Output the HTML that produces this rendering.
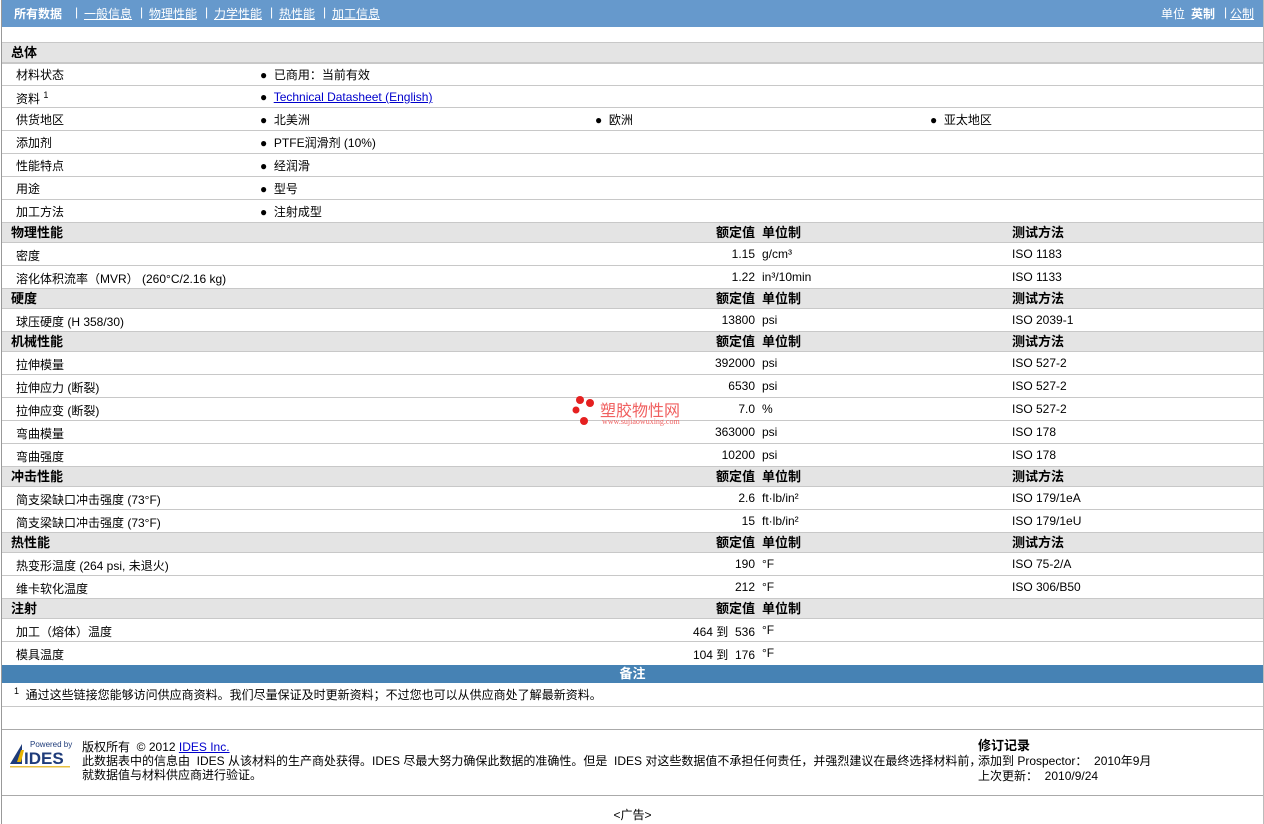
<!DOCTYPE html>
<html><head><meta charset="utf-8">
<style>
body{margin:0;width:1264px;height:824px;background:#fff;position:relative;overflow:hidden;font-family:"Liberation Sans","Noto Sans CJK SC",sans-serif;font-size:12px;color:#000}
.wrap{position:absolute;left:1px;top:0;width:1261px;height:824px;border-left:1px solid #999;border-right:1px solid #bbb}
.top{position:absolute;left:0;top:0;width:1261px;height:27px;background:#6699cc;color:#fff}
.top span{position:absolute;top:5px;font-size:12px}
.top u{text-decoration:underline}
.r{position:absolute;left:0;width:1261px;border-bottom:1px solid #c8c8c8}
.h{background:#e4e4e4;font-weight:bold;font-size:13px}
.r span{position:absolute;white-space:nowrap}
.h span{top:-1px !important}
.r:not(.h) span{margin-top:-1px}
.b{left:258px}
.v{right:508px;text-align:right}
.u{left:760px}
.t{left:1010px}
a{color:#0000cc}
</style></head><body>
<div class="wrap">
<div class="top">
<span style="left:12px;font-weight:bold">所有数据</span>
<span style="left:73px">|</span><span style="left:82px"><u>一般信息</u></span>
<span style="left:138px">|</span><span style="left:147px"><u>物理性能</u></span>
<span style="left:203px">|</span><span style="left:212px"><u>力学性能</u></span>
<span style="left:268px">|</span><span style="left:277px"><u>热性能</u></span>
<span style="left:321px">|</span><span style="left:330px"><u>加工信息</u></span>
<span style="left:1159px">单位</span><span style="left:1189px;font-weight:bold">英制</span><span style="left:1222px">|</span><span style="left:1228px"><u>公制</u></span>
</div>
<div class="r" style="top:42px;height:20px;border-top:1px solid #c8c8c8" ></div>
<div class="r h" style="top:43px;height:19px"><span style="left:9px;top:2px">总体</span></div>

<div class="r" style="top:63px;height:22px"><span style="left:14px;top:4px">材料状态</span><span class="b" style="top:4px">●&nbsp; 已商用：当前有效</span></div>
<div class="r" style="top:86px;height:21px"><span style="left:14px;top:5px">资料 <sup style="font-size:9px">1</sup></span><span class="b" style="top:5px">●&nbsp; <a href="#">Technical Datasheet (English)</a></span></div>
<div class="r" style="top:108px;height:22px"><span style="left:14px;top:4px">供货地区</span><span class="b" style="top:4px">●&nbsp; 北美洲</span><span style="left:593px;top:4px">●&nbsp; 欧洲</span><span style="left:928px;top:4px">●&nbsp; 亚太地区</span></div>
<div class="r" style="top:131px;height:22px"><span style="left:14px;top:4px">添加剂</span><span class="b" style="top:4px">●&nbsp; PTFE润滑剂 (10%)</span></div>
<div class="r" style="top:154px;height:22px"><span style="left:14px;top:4px">性能特点</span><span class="b" style="top:4px">●&nbsp; 经润滑</span></div>
<div class="r" style="top:177px;height:22px"><span style="left:14px;top:4px">用途</span><span class="b" style="top:4px">●&nbsp; 型号</span></div>
<div class="r" style="top:200px;height:22px"><span style="left:14px;top:4px">加工方法</span><span class="b" style="top:4px">●&nbsp; 注射成型</span></div>

<div class="r h" style="top:223px;height:19px"><span style="left:9px;top:1px">物理性能</span><span class="v" style="top:1px">额定值</span><span class="u" style="top:1px">单位制</span><span class="t" style="top:1px">测试方法</span></div>
<div class="r" style="top:243px;height:22px"><span style="left:14px;top:5px">密度</span><span class="v" style="top:5px">1.15</span><span class="u" style="top:5px">g/cm³</span><span class="t" style="top:5px">ISO 1183</span></div>
<div class="r" style="top:266px;height:22px"><span style="left:14px;top:5px">溶化体积流率（MVR） (260°C/2.16 kg)</span><span class="v" style="top:5px">1.22</span><span class="u" style="top:5px">in³/10min</span><span class="t" style="top:5px">ISO 1133</span></div>

<div class="r h" style="top:289px;height:19px"><span style="left:9px;top:1px">硬度</span><span class="v" style="top:1px">额定值</span><span class="u" style="top:1px">单位制</span><span class="t" style="top:1px">测试方法</span></div>
<div class="r" style="top:309px;height:22px"><span style="left:14px;top:5px">球压硬度 (H 358/30)</span><span class="v" style="top:5px">13800</span><span class="u" style="top:5px">psi</span><span class="t" style="top:5px">ISO 2039-1</span></div>

<div class="r h" style="top:332px;height:19px"><span style="left:9px;top:1px">机械性能</span><span class="v" style="top:1px">额定值</span><span class="u" style="top:1px">单位制</span><span class="t" style="top:1px">测试方法</span></div>
<div class="r" style="top:352px;height:22px"><span style="left:14px;top:5px">拉伸模量</span><span class="v" style="top:5px">392000</span><span class="u" style="top:5px">psi</span><span class="t" style="top:5px">ISO 527-2</span></div>
<div class="r" style="top:375px;height:22px"><span style="left:14px;top:5px">拉伸应力 (断裂)</span><span class="v" style="top:5px">6530</span><span class="u" style="top:5px">psi</span><span class="t" style="top:5px">ISO 527-2</span></div>
<div class="r" style="top:398px;height:22px"><span style="left:14px;top:5px">拉伸应变 (断裂)</span><span class="v" style="top:5px">7.0</span><span class="u" style="top:5px">%</span><span class="t" style="top:5px">ISO 527-2</span></div>
<div class="r" style="top:421px;height:22px"><span style="left:14px;top:5px">弯曲模量</span><span class="v" style="top:5px">363000</span><span class="u" style="top:5px">psi</span><span class="t" style="top:5px">ISO 178</span></div>
<div class="r" style="top:444px;height:22px"><span style="left:14px;top:5px">弯曲强度</span><span class="v" style="top:5px">10200</span><span class="u" style="top:5px">psi</span><span class="t" style="top:5px">ISO 178</span></div>

<div class="r h" style="top:467px;height:19px"><span style="left:9px;top:1px">冲击性能</span><span class="v" style="top:1px">额定值</span><span class="u" style="top:1px">单位制</span><span class="t" style="top:1px">测试方法</span></div>
<div class="r" style="top:487px;height:22px"><span style="left:14px;top:5px">简支梁缺口冲击强度 (73°F)</span><span class="v" style="top:5px">2.6</span><span class="u" style="top:5px">ft·lb/in²</span><span class="t" style="top:5px">ISO 179/1eA</span></div>
<div class="r" style="top:510px;height:22px"><span style="left:14px;top:5px">简支梁缺口冲击强度 (73°F)</span><span class="v" style="top:5px">15</span><span class="u" style="top:5px">ft·lb/in²</span><span class="t" style="top:5px">ISO 179/1eU</span></div>

<div class="r h" style="top:533px;height:19px"><span style="left:9px;top:1px">热性能</span><span class="v" style="top:1px">额定值</span><span class="u" style="top:1px">单位制</span><span class="t" style="top:1px">测试方法</span></div>
<div class="r" style="top:553px;height:22px"><span style="left:14px;top:5px">热变形温度 (264 psi, 未退火)</span><span class="v" style="top:5px">190</span><span class="u" style="top:5px">°F</span><span class="t" style="top:5px">ISO 75-2/A</span></div>
<div class="r" style="top:576px;height:22px"><span style="left:14px;top:5px">维卡软化温度</span><span class="v" style="top:5px">212</span><span class="u" style="top:5px">°F</span><span class="t" style="top:5px">ISO 306/B50</span></div>

<div class="r h" style="top:599px;height:19px"><span style="left:9px;top:1px">注射</span><span class="v" style="top:1px">额定值</span><span class="u" style="top:1px">单位制</span></div>
<div class="r" style="top:619px;height:22px"><span style="left:14px;top:5px">加工（熔体）温度</span><span class="v" style="top:5px">464 到 &nbsp;536</span><span class="u" style="top:5px">°F</span></div>
<div class="r" style="top:642px;height:22px;border-bottom:none"><span style="left:14px;top:5px">模具温度</span><span class="v" style="top:5px">104 到 &nbsp;176</span><span class="u" style="top:5px">°F</span></div>

<div style="position:absolute;left:0;top:665px;width:1261px;height:18px;background:#4682b4;color:#fff;font-weight:bold;font-size:13px;text-align:center;line-height:17px">备注</div>
<div class="r" style="top:684px;height:22px"><span style="left:12px;top:3px"><sup style="font-size:9px">1</sup>&nbsp; 通过这些链接您能够访问供应商资料。我们尽量保证及时更新资料；不过您也可以从供应商处了解最新资料。</span></div>
<div class="r" style="top:707px;height:22px;border-bottom:1px solid #aaa"></div>

<div style="position:absolute;left:7px;top:740px;width:64px;height:30px">
<svg width="64" height="30" viewBox="0 0 64 30"><polygon points="1,24 13,4 13,24" fill="#1f3c7a"/><polygon points="8,22 12,10 15,10 12,22" fill="#e8b400"/><text x="21" y="7" font-size="8" fill="#1f3c7a" font-family="Liberation Sans">Powered by</text><text x="15" y="24" font-size="17" font-weight="bold" fill="#1f3c7a" font-family="Liberation Sans">IDES</text><rect x="1" y="26" width="60" height="1.5" fill="#e8c040"/></svg>
</div>
<div style="position:absolute;left:80px;top:740px;line-height:14px;font-size:12px">版权所有 &nbsp;© 2012 <a href="#">IDES Inc.</a><br>此数据表中的信息由 &nbsp;IDES 从该材料的生产商处获得。IDES 尽最大努力确保此数据的准确性。但是 &nbsp;IDES 对这些数据值不承担任何责任，并强烈建议在最终选择材料前，<br>就数据值与材料供应商进行验证。</div>
<div style="position:absolute;left:976px;top:738px;line-height:15px;font-size:12px"><b style="font-size:13px">修订记录</b><br>添加到 Prospector： &nbsp;2010年9月<br>上次更新： &nbsp;2010/9/24</div>
<div style="position:absolute;left:0;top:795px;width:1261px;border-top:1px solid #aaa"></div>
<div style="position:absolute;left:0;top:806px;width:1261px;text-align:center;font-size:12px">&lt;广告&gt;</div>

<div style="position:absolute;left:568px;top:394px;width:130px;height:34px">
<svg width="32" height="34"><circle cx="10" cy="6" r="4" fill="#e52020"/><circle cx="20" cy="9" r="4" fill="#e52020"/><circle cx="6" cy="16" r="3.5" fill="#e52020"/><circle cx="14" cy="27" r="4" fill="#e52020"/></svg>
<span style="position:absolute;left:30px;top:3px;color:#f06060;font-size:16px">塑胶物性网</span>
<span style="position:absolute;left:32px;top:23px;color:#f06060;font-size:8px;font-family:'Liberation Serif',serif">www.sujiaowuxing.com</span>
</div>
</div>
</body></html>
